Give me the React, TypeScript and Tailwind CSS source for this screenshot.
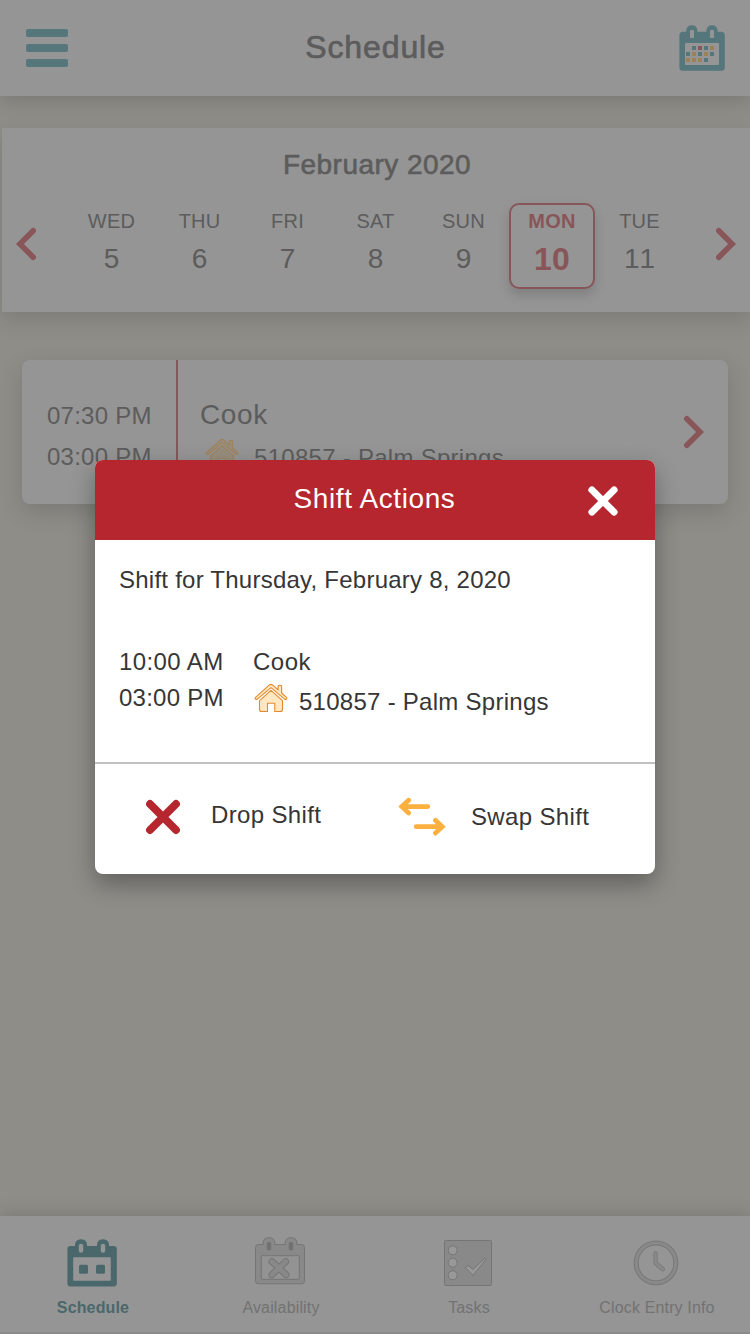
import type { ReactNode } from 'react';

const TEAL = '#55777b';
const RED = '#885659';

function Chevron({ direction }: { direction: 'left' | 'right' }) {
  return (
    <svg width="20" height="34" viewBox="0 0 20 34" fill="none" stroke={RED} strokeWidth="5.6" strokeLinecap="round">
      <path d={direction === 'left' ? 'M17.2 3.8 3.900 17l13.300 13.200' : 'M2.800 3.800 16.100 17 2.800 30.200'} />
    </svg>
  );
}

function Cross({ size, inset, width, color }: { size: number; inset: number; width: number; color: string }) {
  const a = width / 2 + inset;
  const b = size - a;
  return (
    <svg width={size} height={size} viewBox={`0 0 ${size} ${size}`} stroke={color} strokeWidth={width} strokeLinecap="round">
      <path d={`M${a} ${a}L${b} ${b}M${b} ${a}L${a} ${b}`} />
    </svg>
  );
}

function House({ stroke = '#e58a2c', fill = '#fee7c1' }: { stroke?: string; fill?: string }) {
  return (
    <svg width="34" height="30" viewBox="254 683 34 30" stroke={stroke} fill={fill} strokeWidth="1.1" strokeLinejoin="round">
      <path d="M259.500 700.700 271 690.300l11.500 10.400v8.800q0 2-2 2h-5.700v-8.300h-7.300v8.300h-6q-2 0-2-2z" />
      <path d="M255.300 697.600q-.5 1.300.8 1.800h1L271 687.600l13.900 11.800h1q1.300-.5.800-1.800l-5.100-4.600v-7.300q-1.800-.9-3.500 0v4.200l-5.300-4.800q-1.800-1.400-3.600 0z" />
    </svg>
  );
}

function MonthIcon() {
  const O = '#9c8156';
  const cells: [number, number, string][] = [
    [13, 21, TEAL], [19, 21, RED], [25, 21, TEAL], [31, 21, O],
    [7, 27, TEAL], [13, 27, O], [19, 27, TEAL], [25, 27, O], [31, 27, TEAL],
    [7, 33, O], [13, 33, O], [19, 33, O], [25, 33, TEAL],
  ];
  return (
    <svg width="46" height="46" viewBox="0 0 46 46">
      <rect x="0.400" y="6.700" width="45.400" height="39" rx="3.500" fill={TEAL} />
      <rect x="7.300" y="0.200" width="11" height="16" rx="5" fill={TEAL} />
      <rect x="27.500" y="0.200" width="11" height="16" rx="5" fill={TEAL} />
      <rect x="11" y="5" width="4" height="8" rx="0.800" fill="#959595" />
      <rect x="31" y="5" width="4" height="8" rx="0.800" fill="#959595" />
      <rect x="6" y="18" width="34" height="22" rx="0.800" fill="#959595" />
      {cells.map(([x, y, fill]) => (
        <rect key={`${x}-${y}`} x={x} y={y} width="4" height="4" fill={fill} />
      ))}
    </svg>
  );
}

function ScheduleIcon() {
  return (
    <svg width="50" height="48" viewBox="67 1239 50 48" fill="#4a686c">
      <rect x="67.400" y="1246" width="49.400" height="40.500" rx="3" />
      <rect x="75" y="1239.200" width="12" height="18" rx="5.500" />
      <rect x="97" y="1239.200" width="12" height="18" rx="5.500" />
      <rect x="78.800" y="1243.800" width="4.400" height="9" rx="2.200" fill="#959595" />
      <rect x="100.800" y="1243.800" width="4.400" height="9" rx="2.200" fill="#959595" />
      <rect x="73.200" y="1257.300" width="37.600" height="23.400" rx="0.800" fill="#959595" />
      <rect x="79" y="1264.800" width="9" height="9" rx="1.500" />
      <rect x="96" y="1264.800" width="9" height="9" rx="1.500" />
    </svg>
  );
}

function AvailabilityIcon() {
  return (
    <svg width="50" height="48" viewBox="255 1237 50 48" fill="#898989" stroke="#757575" strokeWidth="1">
      <path d="M258.500 1244.500h4.700v-1.500q0-5.300 5.800-5.300t5.800 5.300v1.500h10.400v-1.500q0-5.300 5.800-5.300t5.800 5.300v1.500h4.700q3 0 3 3v33.300q0 3-3 3h-43q-3 0-3-3v-33.300q0-3 3-3z" />
      <rect x="261.300" y="1255.700" width="38" height="23.600" rx="0.800" fill="#939393" />
      <rect x="267.200" y="1242.200" width="3.600" height="8" rx="1.600" fill="#707070" />
      <rect x="289.200" y="1242.200" width="3.600" height="8" rx="1.600" fill="#707070" />
      <g strokeLinecap="round">
        <path d="m271.900 1261.600 14.200 13.200m-.4-13.200-13.800 13.200" stroke="#757575" strokeWidth="6.800" />
        <path d="m271.900 1261.600 14.200 13.200m-.4-13.200-13.800 13.200" stroke="#898989" strokeWidth="4.800" />
      </g>
    </svg>
  );
}

function TasksIcon() {
  return (
    <svg width="50" height="48" viewBox="443 1239 50 48" fill="#989898" stroke="#757575" strokeWidth="1">
      <rect x="444.500" y="1240.500" width="47" height="45" rx="1" fill="#898989" />
      <circle cx="452.700" cy="1250.300" r="4.500" />
      <circle cx="452.700" cy="1262.700" r="4.500" />
      <circle cx="452.700" cy="1275.300" r="4.500" />
      <path d="m465.300 1267.600 2.500-2.200 5.200 4 11.600-11.100q1.600-.3 1.300 1.100l-12.800 16z" strokeLinejoin="round" />
    </svg>
  );
}

function ClockIcon() {
  return (
    <svg width="50" height="48" viewBox="631 1239 50 48" fill="none" stroke="#7d7d7d">
      <circle cx="656" cy="1262.900" r="19.900" stroke="#787878" strokeWidth="5" />
      <circle cx="656" cy="1262.900" r="19.900" stroke="#898989" strokeWidth="3" />
      <path d="M655.600 1253.300v9.700l7.300 6.200" strokeWidth="4.400" strokeLinecap="round" strokeLinejoin="round" />
      <path d="M655.600 1253.300v9.700l7.300 6.200" stroke="#8c8c8c" strokeWidth="2" strokeLinecap="round" strokeLinejoin="round" />
    </svg>
  );
}

function SwapIcon() {
  return (
    <svg width="48" height="40" viewBox="398 797 48 40" fill="none" stroke="#fbb03f" strokeWidth="4.800" strokeLinecap="round">
      <path d="M427.800 806.600H402M408.600 800.200l-6.800 6.400 6.800 6.300" />
      <path d="M416.200 826.700H442M435.400 820.300l6.800 6.400-6.800 6.400" />
    </svg>
  );
}

const days: [string, number][] = [
  ['WED', 5], ['THU', 6], ['FRI', 7], ['SAT', 8], ['SUN', 9], ['MON', 10], ['TUE', 11],
];

function Day({ label, date }: { label: string; date: number }) {
  if (date === 10) {
    return (
      <div className="flex w-[88px] justify-center">
        <div className="flex h-[86px] w-[86px] flex-col items-center rounded-[10px] border-2 border-[#885659] pt-[4px] font-bold text-[#885659] shadow-[0_6px_12px_rgba(0,0,0,0.15)]">
          <span className="text-[20px] leading-[24px] tracking-[0.3px]">{label}</span>
          <span className="mt-[6px] text-[32px] leading-[40px] tracking-[0.3px]">{date}</span>
        </div>
      </div>
    );
  }
  return (
    <div className="flex w-[88px] flex-col items-center pt-[6px]">
      <span className="mr-px text-[20px] leading-[24px] tracking-[0.2px]">{label}</span>
      <span className="mt-[6px] mr-px text-[28px] leading-[40px] [font-kerning:none]">{date}</span>
    </div>
  );
}

function Tab({ icon, label, active, raised }: { icon: ReactNode; label: string; active?: boolean; raised?: boolean }) {
  return (
    <div className={`flex flex-col items-center ${active ? 'font-bold text-[#4a686c]' : 'text-[#727272]'}`}>
      <div className={`mr-[2px] h-[60px] ${raised ? 'pt-[21px]' : 'pt-[23px]'}`}>{icon}</div>
      <span className="mt-[22px] text-[16px] leading-[20px] tracking-[0.15px]">{label}</span>
    </div>
  );
}

export default function App() {
  return (
    <div className="relative flex h-[1334px] w-[750px] flex-col overflow-hidden bg-[#8e8d88] font-['Liberation_Sans',sans-serif] text-[#5c5c5c]">
      <header className="flex h-[96px] shrink-0 items-start justify-between bg-[#959595] pr-[25px] pl-[26px] shadow-[0_4px_20px_rgba(0,0,0,0.16)]">
        <div className="mt-[29px] flex w-[46px] flex-col gap-[7px]">
          <div className="h-[8px] w-[42px] rounded-[2px] bg-[#55777b]" />
          <div className="h-[8px] w-[42px] rounded-[2px] bg-[#55777b]" />
          <div className="h-[8px] w-[42px] rounded-[2px] bg-[#55777b]" />
        </div>
        <h1 className="mt-[27px] text-[32px] leading-[40px] tracking-[0.9px] [-webkit-text-stroke:0.7px_#5c5c5c]">Schedule</h1>
        <div className="mt-[25px]"><MonthIcon /></div>
      </header>

      <section className="mt-[32px] ml-[2px] h-[184px] shrink-0 bg-[#959595] shadow-[0_8px_20px_rgba(0,0,0,0.12)]">
        <h2 className="pt-[19px] pl-[2px] text-center text-[28px] leading-[36px] tracking-[0.45px] [-webkit-text-stroke:0.6px_#5c5c5c]">February 2020</h2>
        <div className="mt-[20px] flex items-start justify-between pr-[14px] pl-[14px]">
          <div className="w-[51px] pt-[24px]"><Chevron direction="left" /></div>
          <div className="flex">
            {days.map(([label, date]) => <Day key={label} label={label} date={date} />)}
          </div>
          <div className="flex w-[51px] justify-end pt-[24px]"><Chevron direction="right" /></div>
        </div>
      </section>

      <section className="mx-[22px] mt-[48px] flex h-[144px] shrink-0 rounded-[8px] bg-[#959595] shadow-[0_8px_24px_rgba(0,0,0,0.14)]">
        <div className="w-[156px] border-r-2 border-[#885659] pt-[35px] pl-[25px] text-[24px] leading-[41px] tracking-[0.25px]">
          <p>07:30 PM</p>
          <p>03:00 PM</p>
        </div>
        <div className="flex-1 pt-[35px] pl-[22px]">
          <p className="text-[28px] leading-[40px] tracking-[0.6px]">Cook</p>
          <div className="flex gap-[15px] pt-[3px] pl-[5px]">
            <House stroke="#a18259" fill="#978d7c" />
            <span className="pt-[4px] text-[24px] leading-[32px] tracking-[0.28px]">510857 - Palm Springs</span>
          </div>
        </div>
        <div className="pt-[55px] pr-[24px]"><Chevron direction="right" /></div>
      </section>

      <nav className="-ml-px mt-auto grid h-[118px] w-[752px] shrink-0 grid-cols-4 border-b-2 border-[#8b8b8b] bg-[#959595] shadow-[0_-3px_16px_rgba(0,0,0,0.13)]">
        <Tab icon={<ScheduleIcon />} label="Schedule" active />
        <Tab icon={<AvailabilityIcon />} label="Availability" raised />
        <Tab icon={<TasksIcon />} label="Tasks" />
        <Tab icon={<ClockIcon />} label="Clock Entry Info" />
      </nav>

      <div role="dialog" className="absolute top-[460px] left-[95px] flex h-[414px] w-[560px] flex-col overflow-hidden rounded-[8px] bg-white text-[24px] tracking-[0.24px] text-[#363636] shadow-[0_10px_24px_rgba(0,0,0,0.32)]">
        <div className="flex h-[80px] shrink-0 justify-between bg-[#b5262e] pr-[36px] pl-[36px] text-white">
          <div className="w-[31px]" />
          <h3 className="pt-[21px] text-[28px] leading-[36px] tracking-[0.6px]">Shift Actions</h3>
          <div className="pt-[25px]"><Cross size={32} inset={1.4} width={7} color="#ffffff" /></div>
        </div>
        <div className="h-[224px] shrink-0 border-b-2 border-[#c1c1c1] px-[24px] pt-[24px]">
          <p className="leading-[32px]">Shift for Thursday, February 8, 2020</p>
          <div className="mt-[48px] flex">
            <div className="w-[134px] leading-[36px]">
              <p className="tracking-[0.4px]">10:00 AM</p>
              <p>03:00 PM</p>
            </div>
            <div>
              <p className="leading-[36px] tracking-[0.5px]">Cook</p>
              <div className="flex gap-[11px] pt-[3px] pl-[1px]">
                <House />
                <span className="pt-[3px] leading-[32px] tracking-[0.27px]">510857 - Palm Springs</span>
              </div>
            </div>
          </div>
        </div>
        <div className="flex pl-[50px] tracking-[0.35px]">
          <div className="flex w-[253px] gap-[30px] pt-[35px]">
            <Cross size={36} inset={1.1} width={7.8} color="#b5262e" />
            <span className="leading-[32px]">Drop Shift</span>
          </div>
          <div className="flex gap-[25px] pt-[33px]">
            <SwapIcon />
            <span className="pt-[4px] leading-[32px]">Swap Shift</span>
          </div>
        </div>
      </div>
    </div>
  );
}
